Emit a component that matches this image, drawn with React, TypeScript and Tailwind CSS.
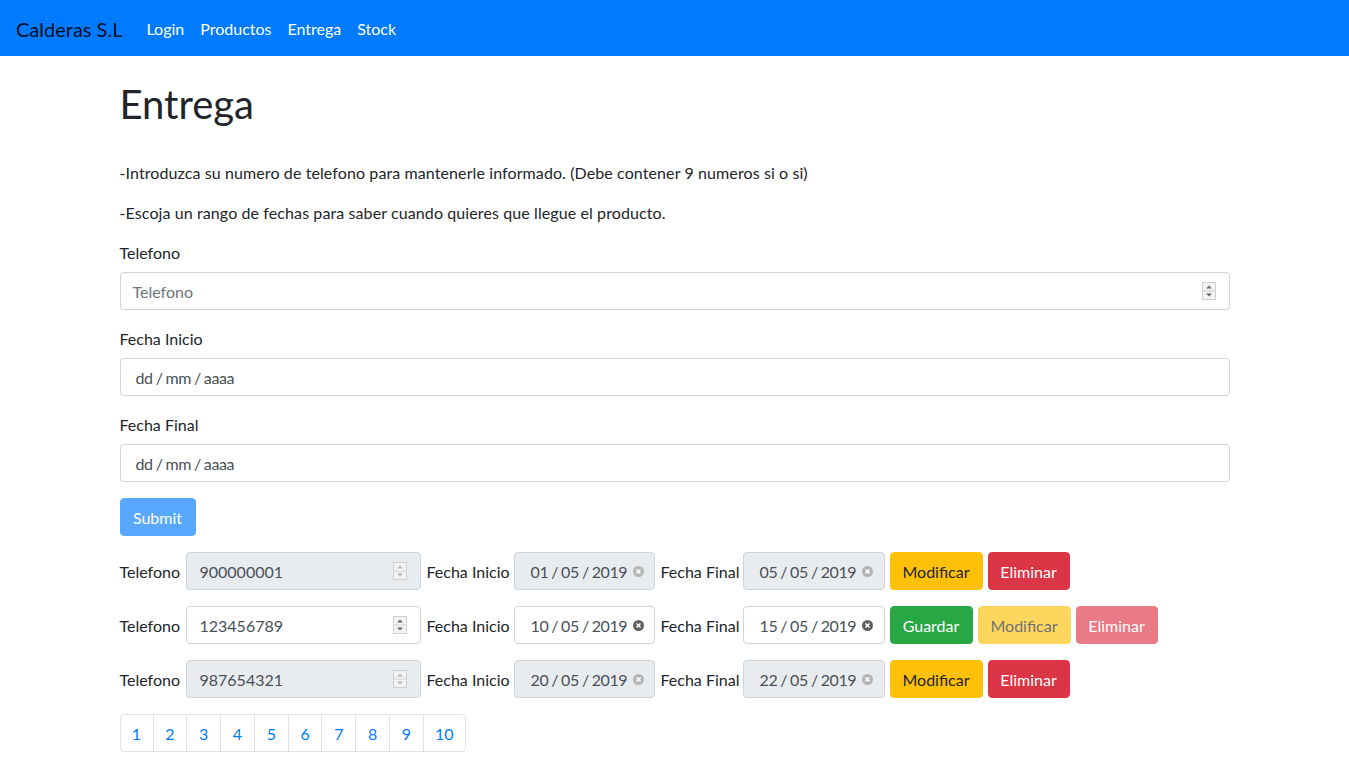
import React from "react";

const font = { fontFamily: '"Segoe UI", Lato, "Noto Sans", "Liberation Sans", sans-serif' };

function Spinner({ disabled }: { disabled?: boolean }) {
  const c = disabled ? "#b8b8b8" : "#6b6b6b";
  return (
    <svg width="14" height="18" viewBox="0 0 14 18" className="shrink-0">
      <rect x="0.5" y="0.5" width="13" height="17" fill="#f3f3f3" stroke="#d0d0d0" />
      <line x1="1" y1="9" x2="13" y2="9" stroke="#d0d0d0" />
      <path d="M4 6.5 L7 3.5 L10 6.5 Z" fill={c} />
      <path d="M4 11.5 L7 14.5 L10 11.5 Z" fill={c} />
    </svg>
  );
}

function ClearIcon({ disabled }: { disabled?: boolean }) {
  const c = disabled ? "#b4b4b4" : "#606060";
  return (
    <svg width="11" height="11" viewBox="0 0 12 12" className="shrink-0">
      <circle cx="6" cy="6" r="6" fill={c} />
      <path d="M3.8 3.8 L8.2 8.2 M8.2 3.8 L3.8 8.2" stroke="#fff" strokeWidth="1.7" />
    </svg>
  );
}

function DateText({ parts }: { parts: string[] }) {
  return (
    <span className="flex items-center pt-px tracking-[-0.4px]">
      <span>{parts[0]}</span>
      <span className="mx-[3px]">/</span>
      <span>{parts[1]}</span>
      <span className="mx-[3px]">/</span>
      <span>{parts[2]}</span>
    </span>
  );
}

function NumField({ value, disabled }: { value: string; disabled?: boolean }) {
  return (
    <div
      className={`flex h-[38px] w-[235px] shrink-0 items-center justify-between rounded-[4px] border border-[#ced4da] pl-[13px] pr-[13px] text-[16px] text-[#495057] ${
        disabled ? "bg-[#e9ecef]" : "bg-white"
      }`}
    >
      <span className="pt-px">{value}</span>
      <Spinner disabled={disabled} />
    </div>
  );
}

function DateField({ value, disabled, w }: { value: string[]; disabled?: boolean; w: string }) {
  return (
    <div
      className={`flex h-[38px] ${w} shrink-0 items-center rounded-[4px] border border-[#ced4da] pl-[16px] text-[16px] text-[#495057] ${
        disabled ? "bg-[#e9ecef]" : "bg-white"
      }`}
    >
      <DateText parts={value} />
      <span className="ml-[6px]">
        <ClearIcon disabled={disabled} />
      </span>
    </div>
  );
}

function Btn({ children, cls }: { children: React.ReactNode; cls: string }) {
  return (
    <button
      className={`ml-[5px] h-[38px] shrink-0 rounded-[4px] border px-0 pt-px text-[16px] leading-[24px] ${cls}`}
    >
      {children}
    </button>
  );
}

function Row({
  tel,
  d1,
  d2,
  editing,
}: {
  tel: string;
  d1: string[];
  d2: string[];
  editing?: boolean;
}) {
  const dis = !editing;
  return (
    <div className="mb-[16px] flex items-center text-[16px] text-[#212529]">
      <span className="w-[66px] shrink-0 whitespace-nowrap pt-px">Telefono</span>
      <NumField value={tel} disabled={dis} />
      <span className="ml-[6px] w-[87px] shrink-0 whitespace-nowrap pt-px">Fecha Inicio</span>
      <DateField value={d1} disabled={dis} w="w-[141px]" />
      <span className="ml-[6px] w-[82px] shrink-0 whitespace-nowrap pt-px">Fecha Final</span>
      <DateField value={d2} disabled={dis} w="w-[142px]" />
      {editing ? (
        <>
          <Btn cls="w-[83px] border-[#28a745] bg-[#28a745] text-white">Guardar</Btn>
          <Btn cls="w-[93px] border-[#ffc107] bg-[#ffc107] text-[#212529] opacity-65">Modificar</Btn>
          <Btn cls="w-[82px] border-[#dc3545] bg-[#dc3545] text-white opacity-65">Eliminar</Btn>
        </>
      ) : (
        <>
          <Btn cls="w-[93px] border-[#ffc107] bg-[#ffc107] text-[#212529]">Modificar</Btn>
          <Btn cls="w-[82px] border-[#dc3545] bg-[#dc3545] text-white">Eliminar</Btn>
        </>
      )}
    </div>
  );
}

export default function App() {
  return (
    <div style={font} className="min-h-screen bg-white text-[16px] leading-[24px] text-[#212529]">
      <nav className="flex h-[56px] items-center bg-[#007bff] px-[16px] pt-px">
        <span className="mr-[16px] text-[20px] leading-[30px] text-[rgba(0,0,0,0.9)]">Calderas S.L</span>
        <div className="flex">
          {["Login", "Productos", "Entrega", "Stock"].map((l) => (
            <a key={l} className="px-[8px] py-[8px] text-white">
              {l}
            </a>
          ))}
        </div>
      </nav>
      <div className="mx-auto w-[1140px] px-[15px] pt-[24px]">
        <h1 className="mb-[32px] text-[40px] font-normal leading-[48px]">Entrega</h1>
        <p className="mb-[15px] pt-px tracking-[0.1px]">
          -Introduzca su numero de telefono para mantenerle informado. (Debe contener 9 numeros si o si)
        </p>
        <p className="mb-[15px] pt-px tracking-[0.1px]">
          -Escoja un rango de fechas para saber cuando quieres que llegue el producto.
        </p>
        <div className="mb-[16px]">
          <div className="mb-[7px] pt-px">Telefono</div>
          <div className="flex h-[38px] items-center justify-between rounded-[4px] border border-[#ced4da] pl-[12px] pr-[13px]">
            <span className="pt-px text-[#6c757d]">Telefono</span>
            <Spinner />
          </div>
        </div>
        <div className="mb-[16px]">
          <div className="mb-[7px] pt-px">Fecha Inicio</div>
          <div className="flex h-[38px] items-center rounded-[4px] border border-[#ced4da] pl-[15px] text-[#495057]">
            <DateText parts={["dd", "mm", "aaaa"]} />
          </div>
        </div>
        <div className="mb-[16px]">
          <div className="mb-[7px] pt-px">Fecha Final</div>
          <div className="flex h-[38px] items-center rounded-[4px] border border-[#ced4da] pl-[15px] text-[#495057]">
            <DateText parts={["dd", "mm", "aaaa"]} />
          </div>
        </div>
        <button className="mb-[16px] h-[38px] w-[76px] rounded-[4px] border border-[#007bff] bg-[#007bff] pt-px text-white opacity-65">
          Submit
        </button>
        <Row tel="900000001" d1={["01", "05", "2019"]} d2={["05", "05", "2019"]} />
        <Row tel="123456789" d1={["10", "05", "2019"]} d2={["15", "05", "2019"]} editing />
        <Row tel="987654321" d1={["20", "05", "2019"]} d2={["22", "05", "2019"]} />
        <div className="flex">
          {[1, 2, 3, 4, 5, 6, 7, 8, 9, 10].map((n, i) => (
            <a
              key={n}
              className={`-ml-px flex h-[38px] items-center justify-center border border-[#dee2e6] pt-px text-[#007bff] first:ml-0 ${
                i === 0 ? "w-[34px] rounded-l-[4px]" : i === 9 ? "w-[43px] rounded-r-[4px]" : "w-[34.8px]"
              }`}
            >
              {n}
            </a>
          ))}
        </div>
      </div>
    </div>
  );
}
